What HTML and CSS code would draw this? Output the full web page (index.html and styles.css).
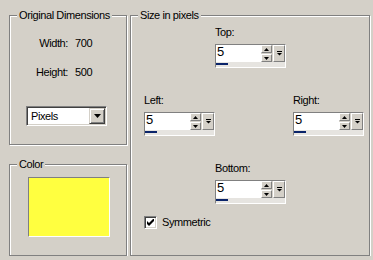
FILE: index.html
```html
<!DOCTYPE html>
<html lang="en">
  <head>
    <meta charset="UTF-8" />
    <title>Add Borders</title>
    <link rel="stylesheet" href="styles.css">
  </head>

  <body>
    <div class="dialog">
      <div class="left">
        <div class="group dims">
          <div class="legend">Original Dimensions</div>
          <div class="dim-grid">
            <span class="dim-label">Width:</span><span>700</span>
            <span class="dim-label">Height:</span><span>500</span>
          </div>
          <div class="combo">
            <span class="combo-text">Pixels</span>
            <span class="btn combo-btn">
              <svg width="7" height="4" viewBox="0 0 7 4"><polygon points="0,0 7,0 3.5,4" /></svg>
            </span>
          </div>
        </div>

        <div class="group color">
          <div class="legend">Color</div>
          <div class="swatch"></div>
        </div>
      </div>

      <div class="group size">
        <div class="legend">Size in pixels</div>
        <div class="sides">
          <div class="field f-top">
            <span>Top:</span>
            <div class="spin">
              <div class="spin-row">
                <span class="spin-edit">5</span>
                <span class="spin-arrows">
                  <span class="btn"><svg width="5" height="3" viewBox="0 0 5 3"><polygon points="0,3 5,3 2.5,0" /></svg></span>
                  <span class="btn"><svg width="5" height="3" viewBox="0 0 5 3"><polygon points="0,0 5,0 2.5,3" /></svg></span>
                </span>
                <span class="btn popup"><svg width="5" height="5" viewBox="0 0 5 5"><rect width="5" height="1" /><polygon points="0,2 5,2 2.5,4.6" /></svg></span>
              </div>
              <div class="strip"><span class="bar"></span></div>
            </div>
          </div>

          <div class="field f-left">
            <span>Left:</span>
            <div class="spin">
              <div class="spin-row">
                <span class="spin-edit">5</span>
                <span class="spin-arrows">
                  <span class="btn"><svg width="5" height="3" viewBox="0 0 5 3"><polygon points="0,3 5,3 2.5,0" /></svg></span>
                  <span class="btn"><svg width="5" height="3" viewBox="0 0 5 3"><polygon points="0,0 5,0 2.5,3" /></svg></span>
                </span>
                <span class="btn popup"><svg width="5" height="5" viewBox="0 0 5 5"><rect width="5" height="1" /><polygon points="0,2 5,2 2.5,4.6" /></svg></span>
              </div>
              <div class="strip"><span class="bar"></span></div>
            </div>
          </div>

          <div class="field f-right">
            <span>Right:</span>
            <div class="spin">
              <div class="spin-row">
                <span class="spin-edit">5</span>
                <span class="spin-arrows">
                  <span class="btn"><svg width="5" height="3" viewBox="0 0 5 3"><polygon points="0,3 5,3 2.5,0" /></svg></span>
                  <span class="btn"><svg width="5" height="3" viewBox="0 0 5 3"><polygon points="0,0 5,0 2.5,3" /></svg></span>
                </span>
                <span class="btn popup"><svg width="5" height="5" viewBox="0 0 5 5"><rect width="5" height="1" /><polygon points="0,2 5,2 2.5,4.6" /></svg></span>
              </div>
              <div class="strip"><span class="bar"></span></div>
            </div>
          </div>

          <div class="field f-bottom">
            <span>Bottom:</span>
            <div class="spin">
              <div class="spin-row">
                <span class="spin-edit">5</span>
                <span class="spin-arrows">
                  <span class="btn"><svg width="5" height="3" viewBox="0 0 5 3"><polygon points="0,3 5,3 2.5,0" /></svg></span>
                  <span class="btn"><svg width="5" height="3" viewBox="0 0 5 3"><polygon points="0,0 5,0 2.5,3" /></svg></span>
                </span>
                <span class="btn popup"><svg width="5" height="5" viewBox="0 0 5 5"><rect width="5" height="1" /><polygon points="0,2 5,2 2.5,4.6" /></svg></span>
              </div>
              <div class="strip"><span class="bar"></span></div>
            </div>
          </div>
        </div>

        <div class="check">
          <span class="check-box">
            <svg width="7" height="7" viewBox="0 0 7 7"><polygon points="0,2 2,4 7,-1 7,2 2,7 0,5" /></svg>
          </span>
          <span>Symmetric</span>
        </div>
      </div>
    </div>
  </body>
</html>
```

FILE: styles.css
```css
* {
  box-sizing: border-box;
}

body {
  margin: 0;
  background: #d4d0c8;
  color: #000;
  font: 11px/13px "Liberation Sans", Arial, sans-serif;
  letter-spacing: -0.4px;
}

.dialog {
  display: flex;
  gap: 3px;
  padding: 15px 0 0 9px;
}

.left {
  display: flex;
  flex-direction: column;
  gap: 19px;
  width: 118px;
}

/* etched group box */
.group {
  border: 1px solid #808080;
  box-shadow: 1px 1px 0 #fff, inset 1px 1px 0 #fff;
}

.legend {
  width: fit-content;
  margin: -7px 0 0 7px;
  padding: 0 2px;
  background: #d4d0c8;
}

.dims {
  height: 130px;
}

.color {
  height: 92px;
}

.size {
  width: 240px;
  height: 241px;
}

.dim-grid {
  display: grid;
  grid-template-columns: 58px auto;
  column-gap: 7px;
  row-gap: 16px;
  margin-top: 15px;
}

.dim-label {
  text-align: right;
}

/* raised button */
.btn {
  display: flex;
  align-items: center;
  justify-content: center;
  background: #d4d0c8;
  border: 1px solid;
  border-color: #fff #808080 #808080 #fff;
}

.btn svg {
  fill: #000;
}

.combo {
  display: flex;
  align-items: center;
  justify-content: space-between;
  width: 81px;
  height: 20px;
  margin: 27px 0 0 16px;
  background: #fff;
  border: 1px solid;
  border-color: #808080 #fff #fff #808080;
  box-shadow: inset 1px 1px 0 #404040, inset -1px -1px 0 #d4d0c8;
}

.combo-text {
  padding-left: 4px;
}

.combo-btn {
  width: 16px;
  height: 16px;
  margin-right: 1px;
  border-color: #d4d0c8 #404040 #404040 #d4d0c8;
  box-shadow: inset 1px 1px 0 #fff, inset -1px -1px 0 #808080;
}

.swatch {
  width: 82px;
  height: 60px;
  margin: 6px 0 0 18px;
  background: #ffff40;
  border: 1px solid;
  border-color: #808080 #fff #fff #808080;
}

.sides {
  display: grid;
  grid-template-columns: 71px 78px 71px;
  row-gap: 26px;
  margin: 4px 0 0 13px;
}

.field {
  display: flex;
  flex-direction: column;
  gap: 5px;
}

.f-top {
  grid-column: 2;
  grid-row: 1;
}

.f-left {
  grid-column: 1;
  grid-row: 2;
}

.f-right {
  grid-column: 3;
  grid-row: 2;
}

.f-bottom {
  grid-column: 2;
  grid-row: 3;
}

.spin {
  display: flex;
  flex-direction: column;
  width: 71px;
  height: 24px;
  border: 1px solid;
  border-color: #808080 #fff #fff #808080;
}

.spin-row {
  display: flex;
  gap: 1px;
  height: 17px;
  background: #d4d0c8;
}

.spin-edit {
  width: 45px;
  margin-right: -1px;
  padding-left: 1px;
  background: #fff;
  font-size: 13px;
  line-height: 13px;
}

.spin-arrows {
  display: flex;
  flex-direction: column;
  gap: 1px;
  width: 11px;
}

.spin-arrows .btn {
  height: 8px;
}

.popup {
  width: 12px;
}

.strip {
  height: 5px;
  padding-top: 1px;
  background: #e6e4e0;
}

.bar {
  display: block;
  width: 12px;
  height: 2px;
  background: #0a246a;
}

.check {
  display: flex;
  align-items: center;
  gap: 5px;
  margin: 12px 0 0 13px;
}

.check-box {
  display: flex;
  align-items: center;
  justify-content: center;
  width: 13px;
  height: 13px;
  background: #fff;
  border: 1px solid;
  border-color: #808080 #fff #fff #808080;
  box-shadow: inset 1px 1px 0 #404040, inset -1px -1px 0 #d4d0c8;
}
```
